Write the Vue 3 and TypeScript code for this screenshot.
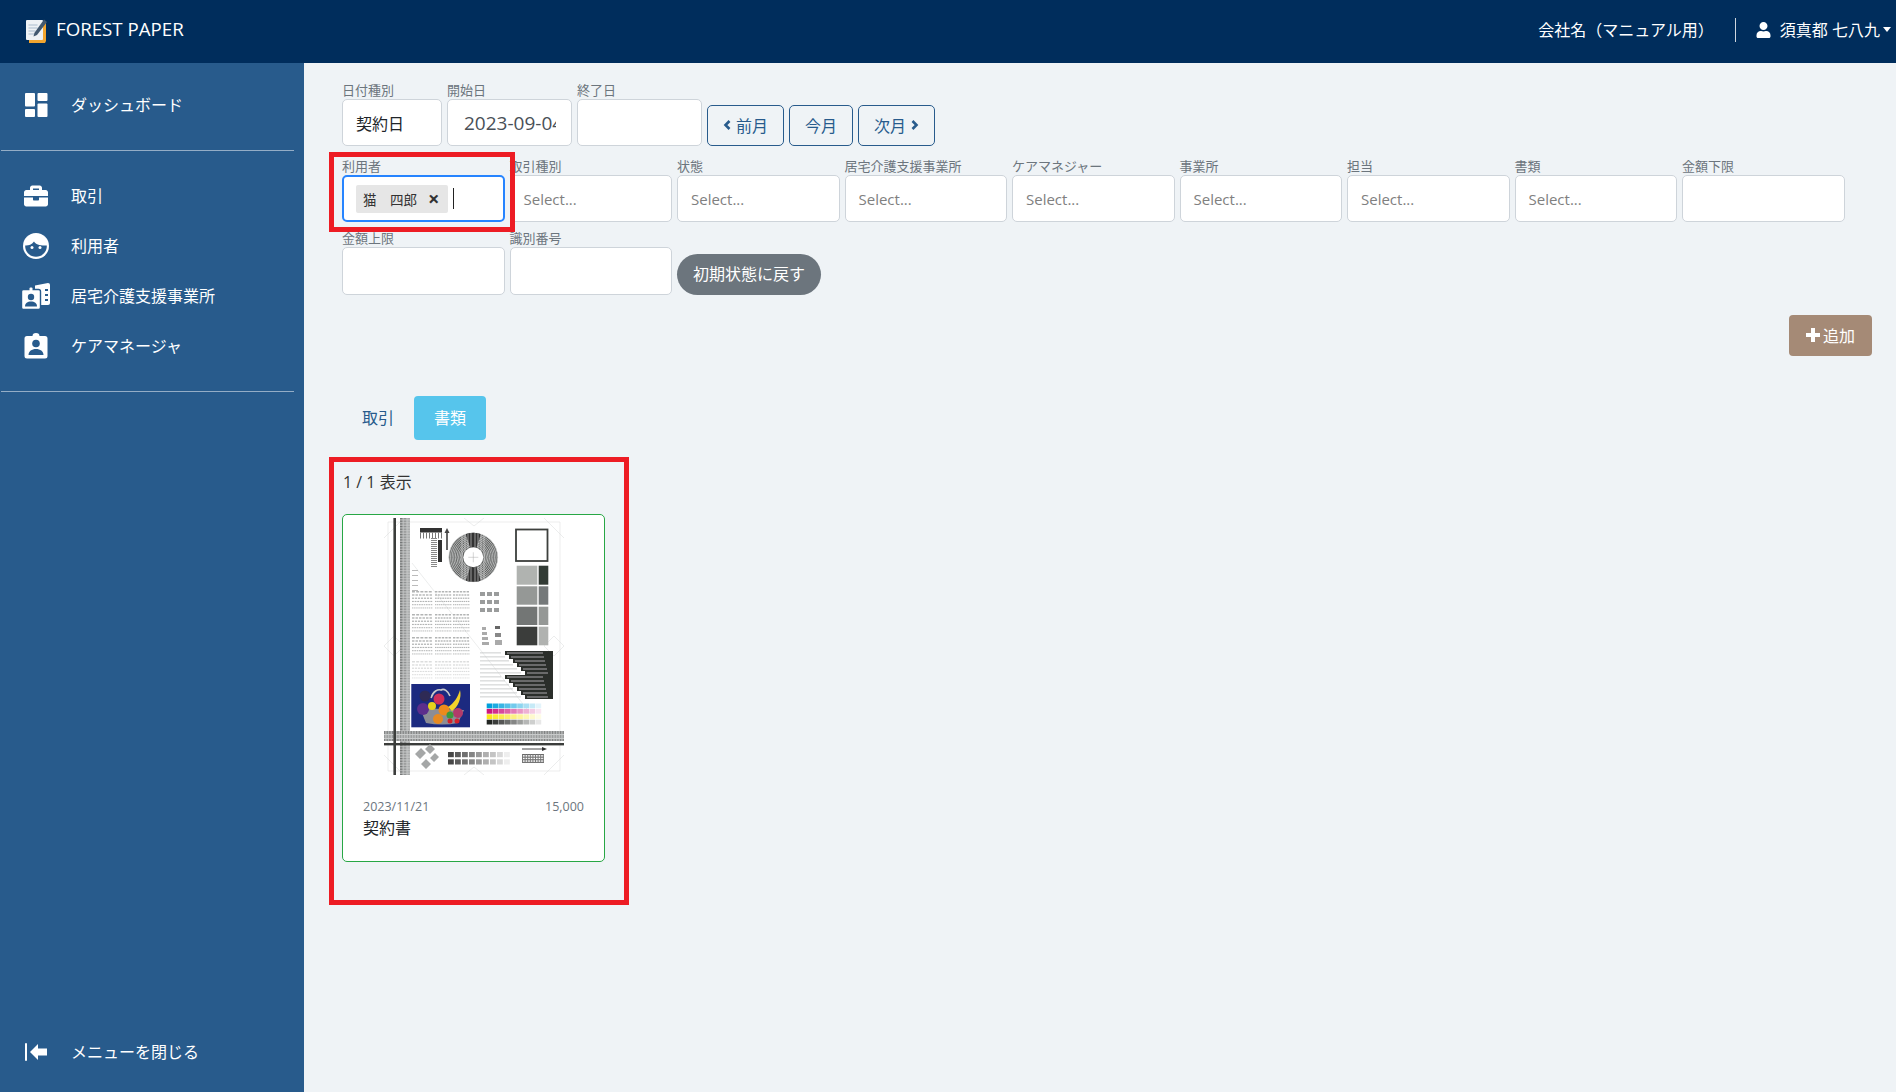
<template>
  <div class="page">
    <header class="topbar">
      <div class="brand">
        <svg class="logo" viewBox="0 0 22 24">
          <path d="M4 4h17v18l-1 2H4z" fill="#f2a52f" />
          <rect x="1" y="1" width="17" height="20" rx="1" fill="#eef2f5" />
          <path d="M3.500 6h9M3.500 9h9M3.500 12h7M3.500 15h7" stroke="#a9bccd" stroke-width="1.200" />
          <path d="M19 .5l3 2.500L12 16l-3.500 1.500 1-3.700z" fill="#41586f" />
        </svg>
        <span class="lift">FOREST PAPER</span>
      </div>
      <div class="top-right">
        <span class="company lift">会社名（マニュアル用）</span>
        <span class="top-sep"></span>
        <svg class="user-icon" viewBox="0 0 448 512"><path fill="#fff" d="M224 256c70.700 0 128-57.300 128-128S294.700 0 224 0 96 57.300 96 128s57.300 128 128 128zm89.600 32h-16.700c-22.200 10.200-46.900 16-72.900 16s-50.600-5.800-72.900-16h-16.700C60.200 288 0 348.200 0 422.400V464c0 26.500 21.500 48 48 48h352c26.500 0 48-21.500 48-48v-41.600c0-74.200-60.200-134.400-134.400-134.400z" /></svg>
        <span class="user-name lift">須真都 七八九</span>
        <span class="caret"></span>
      </div>
    </header>

    <div class="body-row">
      <aside class="sidebar">
        <a class="nav-item first">
          <svg class="nav-icon" viewBox="0 0 24 24" fill="#fff">
            <rect x="1" y="0" width="10" height="13.500" rx="1" />
            <rect x="1" y="16" width="10" height="8" rx="1" />
            <rect x="13.500" y="0" width="10" height="8" rx="1" />
            <rect x="13.500" y="10.500" width="10" height="13.500" rx="1" />
          </svg>
          <span class="lift">ダッシュボード</span>
        </a>
        <hr class="nav-sep" />
        <a class="nav-item">
          <svg class="nav-icon" viewBox="0 0 512 512"><path fill="#fff" d="M320 336c0 8.840-7.160 16-16 16h-96c-8.840 0-16-7.160-16-16v-48H0v144c0 25.600 22.400 48 48 48h416c25.600 0 48-22.400 48-48V288H320v48zm144-208h-80V80c0-25.600-22.400-48-48-48H176c-25.600 0-48 22.400-48 48v48H48c-25.600 0-48 22.400-48 48v80h512v-80c0-25.600-22.400-48-48-48zm-144 0H192V96h128v32z" /></svg>
          <span class="lift">取引</span>
        </a>
        <a class="nav-item">
          <svg class="nav-icon face" viewBox="0 0 26 26">
            <circle cx="13" cy="13" r="13" fill="#fff" />
            <path d="M2.200 12.500c2.800.2 6.200-.4 8.800-4 1.800 3 5.800 4.300 12.800 4 .3 6.300-4.500 11.300-10.800 11.300S1.900 18.800 2.200 12.500z" fill="#285b8c" />
            <circle cx="9" cy="14.500" r="1.500" fill="#fff" />
            <circle cx="17" cy="14.500" r="1.500" fill="#fff" />
          </svg>
          <span class="lift">利用者</span>
        </a>
        <a class="nav-item">
          <svg class="nav-icon wide" viewBox="0 0 28 26">
            <path d="M13 2.500L26 0a2 2 0 0 1 2 2v18a2 2 0 0 1-2 2H13z" fill="#fff" />
            <path d="M23 6h3v2h-3zM23 11h3v2h-3zM23 16h3v2h-3z" fill="#285b8c" />
            <rect x="-.5" y="6.500" width="19" height="20" rx="2" fill="#fff" stroke="#285b8c" stroke-width="1.400" />
            <rect x="7.500" y="4.500" width="3" height="4" rx="1" fill="#fff" />
            <circle cx="9" cy="14" r="3.200" fill="#285b8c" />
            <path d="M3 23.500c0-3.300 2.500-5 6-5s6 1.700 6 5z" fill="#285b8c" />
          </svg>
          <span class="lift">居宅介護支援事業所</span>
        </a>
        <a class="nav-item">
          <svg class="nav-icon care" viewBox="0 0 24 26" fill="#fff">
            <path d="M3 3h5.500a3.500 3 0 0 1 7 0H21a2.500 2.500 0 0 1 2.500 2.500V23a2.500 2.500 0 0 1-2.500 2.500H3A2.500 2.500 0 0 1 .5 23V5.500A2.500 2.500 0 0 1 3 3z" />
            <circle cx="12" cy="10.500" r="3.800" fill="#285b8c" />
            <path d="M4.500 22c0-3.700 3.300-6 7.500-6s7.500 2.300 7.500 6z" fill="#285b8c" />
          </svg>
          <span class="lift">ケアマネージャ</span>
        </a>
        <hr class="nav-sep lower" />
        <a class="nav-item close">
          <svg class="nav-icon" viewBox="0 0 24 18" fill="#fff">
            <rect x="1" y="0" width="2" height="18" rx="1" />
            <path d="M6 9l8-8v4.500h9v7h-9V17z" />
          </svg>
          <span class="lift">メニューを閉じる</span>
        </a>
      </aside>

      <main class="content">
        <div class="date-row">
          <div class="field type-field">
            <label>日付種別</label>
            <div class="box value">契約日</div>
          </div>
          <div class="field date-field">
            <label>開始日</label>
            <input class="box date-input" type="text" value="2023-09-04" readonly />
          </div>
          <div class="field date-field">
            <label>終了日</label>
            <input class="box date-input" type="text" value="" readonly />
          </div>
          <button class="outline-btn">
            <svg class="chev" viewBox="0 0 9 12"><path d="M6.500 2L2.500 6l4 4" /></svg>前月
          </button>
          <button class="outline-btn">今月</button>
          <button class="outline-btn">
            次月<svg class="chev" viewBox="0 0 9 12"><path d="M2.500 2l4 4-4 4" /></svg>
          </button>
        </div>

        <div class="filter-grid">
          <div class="field">
            <label>利用者</label>
            <div class="box focused">
              <span class="chip">猫　四郎<b class="chip-x">×</b></span>
              <span class="text-cursor"></span>
            </div>
          </div>
          <div v-for="name in selects" :key="name" class="field">
            <label>{{ name }}</label>
            <div class="box placeholder">Select...</div>
          </div>
          <div class="field">
            <label>金額下限</label>
            <div class="box"></div>
          </div>
        </div>

        <div class="filter-grid third">
          <div class="field">
            <label>金額上限</label>
            <div class="box tall"></div>
          </div>
          <div class="field">
            <label>識別番号</label>
            <div class="box tall"></div>
          </div>
          <button class="reset-btn">初期状態に戻す</button>
        </div>

        <div class="add-row">
          <button class="add-btn">
            <svg class="plus" viewBox="0 0 14 14"><path d="M5 0h4v5h5v4H9v5H5V9H0V5h5z" /></svg>追加
          </button>
        </div>

        <nav class="tabs">
          <a class="tab">取引</a>
          <a class="tab active">書類</a>
        </nav>

        <p class="count">1 / 1 表示</p>

        <div class="doc-card">
          <svg class="chart" viewBox="0 0 180 257">
            <defs>
              <filter id="soft"><feGaussianBlur stdDeviation="0.3" /></filter>
              <clipPath id="disc"><circle cx="89.300" cy="39.300" r="24.500" /></clipPath>
            </defs>
            <g filter="url(#soft)">
              <rect width="180" height="257" fill="#fff" />
              <path d="M4 4h172v249H4z M0 20L20 0M160 0l20 20M0 237l20 20M160 257l20-20M0 128l10-10 10 10-10 10zM160 128l10-10 10 10-10 10zM80 0l10 8 10-8M80 257l10-8 10 8M28 45l122 155" fill="none" stroke="#d8dadb" stroke-width=".5" />
              <rect v-for="(r, i) in rects" :key="i" :x="r.x" :y="r.y" :width="r.w" :height="r.h" :fill="r.c" />

              <circle cx="89.300" cy="39.300" r="24.500" fill="#5f6160" />
              <circle v-for="n in 9" :key="n" cx="89.300" cy="39.300" :r="10 + n * 1.600" fill="none" stroke="#d9dada" stroke-width=".7" />
              <g clip-path="url(#disc)">
                <path d="M89.300 39.300L81 14l16.600 0zM89.300 39.300L81 65h16.600z" fill="#333" />
                <path d="M78 14v50M81 14v50M84 14v50M87 14v50M91 14v50M94 14v50M97 14v50M100 14v50" stroke="#ddd" stroke-width=".6" />
              </g>
              <circle cx="89.300" cy="39.300" r="10" fill="#fff" />
              <path d="M84.300 39.300h10M89.300 34.300v10" stroke="#aaa" stroke-width=".5" />
              <rect x="132" y="11.500" width="31.500" height="31.500" fill="#fff" stroke="#3c3f3e" stroke-width="1.800" />
              <path d="M63 12v20" stroke="#555" stroke-width="1.800" />
              <path d="M60.500 15l2.500-5 2.500 5z" fill="#444" />
              <path d="M138 231h21" stroke="#333" stroke-width=".9" />
              <path d="M158 229l5 2-5 2z" fill="#333" />
              <path d="M31 236l6-6 5 5-6 6zM41 231l5-5 5 5-5 5zM37 246l5-5 5 5-5 5zM46 240l5-5 4 4-5 5z" fill="#a5a7a7" />

              <!-- fruit photo -->
              <rect x="27.300" y="166" width="58.700" height="43.300" fill="#1c2a80" />
              <path d="M36 190l6 15q16 3 32 0l6-13z" fill="#8c8d95" />
              <path d="M47 180c2-7 7-9 10-8 3-2 7 1 9 6" fill="none" stroke="#c9c9c9" stroke-width="1.600" />
              <circle cx="41" cy="178" r="5.500" fill="#2d2a55" />
              <circle cx="39" cy="191" r="6" fill="#5b2d8c" />
              <circle cx="48" cy="188" r="4" fill="#e8d21e" />
              <circle cx="55" cy="181" r="5.500" fill="#cf2f5a" />
              <circle cx="60" cy="192" r="5.500" fill="#ee8a1f" />
              <circle cx="54" cy="201" r="5" fill="#e68a24" />
              <path d="M64 189c6-4 10-10 12-17 2 8-2 17-8 21z" fill="#f3d22b" />
              <circle cx="74" cy="195" r="5" fill="#b23b6a" />
              <circle cx="66" cy="197" r="3.500" fill="#3c9a3a" />
              <circle cx="66" cy="203" r="2.500" fill="#d3222c" />
              <circle cx="73" cy="203" r="2.500" fill="#d3222c" />
            </g>
          </svg>
          <div class="doc-meta">
            <span>2023/11/21</span>
            <span>15,000</span>
          </div>
          <div class="doc-name">契約書</div>
        </div>

        <div class="annot annot-user"></div>
        <div class="annot annot-list"></div>
      </main>
    </div>
  </div>
</template>

<script setup lang="ts">
interface Bit {
  x: number
  y: number
  w: number
  h: number
  c: string
}

const selects = ['取引種別', '状態', '居宅介護支援事業所', 'ケアマネジャー', '事業所', '担当', '書類']

const rects: Bit[] = []
const add = (x: number, y: number, w: number, h: number, c: string) => {
  rects.push({ x, y, w, h, c })
}

// 縦横のライン
add(16, 0, 10, 257, '#c9cbcb')
for (let y = 0; y < 257; y += 1.6) {
  add(16, y, 2.6, 0.9, '#6d6f6f')
  add(19.5, y, 3, 0.9, '#8c8e8e')
  add(23.4, y, 2.6, 0.9, '#a5a7a7')
}
add(0, 213, 180, 10, '#c9cbcb')
for (let x = 0; x < 180; x += 1.6) {
  add(x, 213, 0.9, 3, '#7a7c7c')
  add(x, 217, 0.9, 3, '#959797')
  add(x, 221, 0.9, 2, '#7a7c7c')
}
add(9.4, 0, 2.6, 257, '#3a3c3b')
add(0, 225, 180, 2.4, '#3a3c3b')

// 左上のパターン
add(36, 10, 22, 4.5, '#333')
for (let i = 0; i < 8; i++) add(36 + i * 3, 14.5, 1, 6, '#777')
for (let i = 0; i < 15; i++) add(47, 20 + i * 2, 6, 1, '#888')
add(54, 22, 4, 22, '#333')

// 文字ブロック（細かすぎて読めない部分）
const blockTops = [73, 96, 119, 143]
const blockCols = [[28, 21], [51, 17], [69, 17]]
blockTops.forEach((top, b) => {
  for (let l = 0; l < 6; l++) {
    for (const [left, width] of blockCols) {
      const pieces = 5 + l
      const step = width / pieces
      for (let p = 0; p < pieces; p++) {
        add(left + p * step, top + l * 3.3, step * 0.7, 1.5 - l * 0.12, b === 3 ? '#dcdddd' : '#b2b4b4')
      }
    }
  }
})
for (let l = 0; l < 3; l++) {
  for (let c = 0; c < 3; c++) add(96 + c * 7, 74 + l * 8, 5, 4, '#9a9c9c')
}
for (let l = 0; l < 4; l++) add(98, 109 + l * 5, 4 + l, 3, '#aaa')
add(111, 108, 5, 3, '#666')
add(111, 115, 6, 4, '#888')
add(111, 122, 7, 5, '#aaa')
for (let l = 0; l < 5; l++) add(28, 52 + l * 5, 6, 1, '#bbb')

// 濃度パッチ
const patches = [
  [47.7, 19, '#b0b3b0', '#333a35'],
  [68.3, 18.4, '#959896', '#75797a'],
  [88.7, 18.3, '#737675', '#959896'],
  [108.7, 18.6, '#3a3d3b', '#b0b2b0'],
] as const
for (const [y, h, a, b] of patches) {
  add(132.7, y, 20.6, h, a)
  add(154.7, y, 9.6, h, b)
}

// 黒地の文字ウェッジ
for (const top of [133, 157]) {
  for (let l = 0; l < 6; l++) {
    const left = 121 + l * 4
    add(left, top + l * 4, 169 - left, 4, '#2a2d2c')
    add(left + 2, top + l * 4 + 1.5, (169 - left) * 0.75, 1, '#a8aaa9')
    add(96, top + l * 4 + 1.5, left - 100, 0.8, '#c0c2c2')
  }
}

// カラーバー
const bars = [
  [0, 160, 220],
  [205, 20, 125],
  [250, 230, 30],
  [35, 38, 35],
]
bars.forEach((rgb, row) => {
  for (let i = 0; i < 9; i++) {
    const t = i / 9
    const [r, g, b] = rgb.map(v => Math.round(v + (255 - v) * t))
    add(102.7 + i * 6.1, 185.5 + row * 5.4, 5.7, 4.8, `rgb(${r},${g},${b})`)
  }
})

// 下のグレースケール
for (let row = 0; row < 2; row++) {
  for (let i = 0; i < 9; i++) {
    const v = Math.round(70 + i * 21)
    add(64 + i * 7, 234 + row * 7.3, 5.8, 5.2, `rgb(${v},${v},${v})`)
  }
}
for (let i = 0; i < 4; i++) add(138, 236 + i * 2.6, 22, 1.1, '#666')
for (let i = 0; i < 9; i++) add(138 + i * 2.6, 236, 1, 8, '#777')
</script>

<style scoped>
.page {
  width: 1896px;
  height: 1092px;
  display: flex;
  flex-direction: column;
  overflow: hidden;
  font-family: "Open Sans", "Noto Sans CJK JP", sans-serif;
  background: #eff3f6;
  color: #212529;
}

/* CJKの行が少し下に出るので持ち上げる */
.lift {
  padding-bottom: 2px;
}

.topbar {
  height: 63px;
  box-sizing: border-box;
  flex: none;
  background: #002d5c;
  color: #fff;
  display: flex;
  align-items: center;
  justify-content: space-between;
  padding: 0 5px 4px 25px;
}

.brand {
  display: flex;
  align-items: center;
  gap: 9px;
  font-size: 18.700px;
}

.logo {
  width: 22px;
  height: 24px;
  margin-top: 2px;
}

.top-right {
  display: flex;
  align-items: center;
  font-size: 16px;
}

.top-sep {
  width: 1px;
  height: 24px;
  background: #cfd6de;
  margin: 0 20px 0 21px;
}

.user-icon {
  width: 15px;
  height: 16px;
  margin-right: 9px;
}

.caret {
  width: 0;
  height: 0;
  margin-left: 3px;
  border-top: 5px solid #fff;
  border-left: 4.500px solid transparent;
  border-right: 4.500px solid transparent;
}

.body-row {
  flex: 1;
  display: flex;
  min-height: 0;
}

.sidebar {
  width: 304px;
  flex: none;
  background: #285b8c;
  color: #fff;
  display: flex;
  flex-direction: column;
  font-size: 16px;
}

.nav-item {
  height: 50px;
  display: flex;
  align-items: center;
  padding-left: 24px;
}

.nav-item.first {
  margin-top: 17px;
}

.nav-icon {
  width: 24px;
  height: 24px;
  margin-right: 23px;
  flex: none;
}

.nav-icon.face {
  width: 26px;
  height: 26px;
  margin: 0 22px 0 -1px;
}

.nav-icon.wide {
  width: 28px;
  height: 26px;
  margin: 0 21px 0 -2px;
}

.nav-icon.care {
  height: 26px;
}

.nav-sep {
  width: 293px;
  height: 1px;
  margin: 20px 0 20px 1px;
  border: 0;
  background: rgba(255, 255, 255, 0.5);
}

.nav-sep.lower {
  margin: 20px 0 0 1px;
}

.close {
  margin-top: auto;
  margin-bottom: 15px;
}

.close .nav-icon {
  height: 18px;
}

.content {
  position: relative;
  flex: 1;
  min-width: 0;
  padding: 19px 24px 0 38px;
}

.date-row {
  display: flex;
  align-items: flex-end;
  gap: 5px;
}

.field {
  display: flex;
  flex-direction: column;
  min-width: 0;
}

.field label {
  height: 17px;
  line-height: 17px;
  font-size: 13px;
  color: #6c757d;
  white-space: nowrap;
}

.box {
  height: 47px;
  box-sizing: border-box;
  background: #fff;
  border: 1px solid #ced4da;
  border-radius: 5px;
  display: flex;
  align-items: center;
}

.type-field {
  width: 100px;
}

.date-field {
  width: 125px;
}

.value {
  padding-left: 13px;
  font-size: 16px;
}

.date-input {
  width: 100%;
  padding: 0 15px 0 16px;
  font: 19px "Open Sans", sans-serif;
  color: #495057;
  outline: none;
}

.outline-btn {
  height: 41px;
  padding: 0 15px 2px;
  background: transparent;
  border: 1px solid #285b8c;
  border-radius: 5px;
  color: #285b8c;
  font: 16px "Open Sans", "Noto Sans CJK JP", sans-serif;
  display: flex;
  align-items: center;
  gap: 4px;
}

.chev {
  width: 9px;
  height: 12px;
  fill: none;
  stroke: #285b8c;
  stroke-width: 2.600;
}

.filter-grid {
  display: grid;
  grid-template-columns: repeat(9, 162.500px);
  column-gap: 5px;
  margin-top: 12px;
}

.filter-grid.third {
  margin-top: 8px;
  align-items: end;
}

.box.tall {
  height: 48px;
}

.focused {
  border: 2px solid #2684ff;
  padding-left: 12px;
}

.chip {
  height: 28px;
  background: #e6e6e6;
  border-radius: 2px;
  display: flex;
  align-items: center;
  padding: 0 9px 0 7px;
  font-size: 13.500px;
  color: #333;
}

.chip-x {
  margin-left: 11px;
  font-size: 20px;
  line-height: 1;
  color: #333;
}

.text-cursor {
  width: 1px;
  height: 21px;
  margin-left: 5px;
  background: #222;
}

.placeholder {
  padding-left: 13px;
  font-size: 15px;
  color: #808080;
}

.reset-btn {
  height: 41px;
  width: 144px;
  padding: 0 0 3px;
  border: 0;
  border-radius: 21px;
  background: #6c757d;
  color: #fff;
  font: 16px "Open Sans", "Noto Sans CJK JP", sans-serif;
}

.add-row {
  display: flex;
  justify-content: flex-end;
  margin-top: 20px;
}

.add-btn {
  width: 83px;
  height: 41px;
  padding: 0 0 2px;
  border: 0;
  border-radius: 4px;
  background: #a58a76;
  color: #fff;
  font: 16px "Open Sans", "Noto Sans CJK JP", sans-serif;
  display: flex;
  align-items: center;
  justify-content: center;
  gap: 3px;
}

.plus {
  width: 14px;
  height: 14px;
  fill: #fff;
}

.tabs {
  display: flex;
  margin-top: 40px;
  font-size: 16px;
}

.tab {
  width: 72px;
  height: 44px;
  box-sizing: border-box;
  padding-bottom: 2px;
  display: flex;
  align-items: center;
  justify-content: center;
  border-radius: 4px;
  color: #285b8c;
}

.tab.active {
  background: #56c5ec;
  color: #fff;
}

.count {
  margin: 30px 0 0 1px;
  height: 24px;
  line-height: 24px;
  font-size: 16px;
  color: #333;
}

.doc-card {
  width: 263px;
  height: 348px;
  box-sizing: border-box;
  margin-top: 20px;
  padding: 3px 20px 0;
  background: #fff;
  border: 1px solid #28a745;
  border-radius: 5px;
}

.chart {
  display: block;
  width: 180px;
  height: 257px;
  margin: 0 auto;
}

.doc-meta {
  display: flex;
  justify-content: space-between;
  margin-top: 23px;
  font-size: 12.500px;
  line-height: 18px;
  color: #6c757d;
}

.doc-name {
  margin-top: 0;
  font-size: 16px;
  line-height: 24px;
  color: #212529;
}

.annot {
  position: absolute;
  box-sizing: border-box;
  border: 5px solid #ed1c24;
  pointer-events: none;
}

.annot-user {
  left: 25px;
  top: 89px;
  width: 186px;
  height: 80px;
}

.annot-list {
  left: 25px;
  top: 394px;
  width: 300px;
  height: 448px;
}
</style>

<style>
html,
body {
  margin: 0;
  background: #eff3f6;
}
</style>
